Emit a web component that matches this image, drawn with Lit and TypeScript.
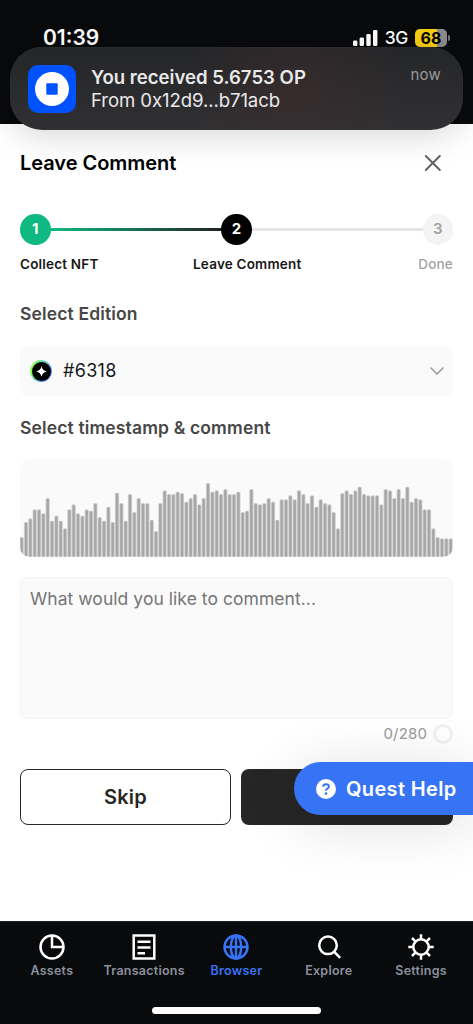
import { LitElement, html, css, svg } from "lit";
import { customElement } from "lit/decorators.js";

// Waveform amplitudes in thirds of a pixel.
const PEAKS = [
  60, 105, 116, 143, 143, 131, 177, 109, 124, 109, 86, 143, 158, 131, 124, 143, 139, 162, 120, 109,
  151, 105, 193, 162, 109, 189, 135, 177, 162, 162, 112, 78, 162, 200, 189, 189, 196, 192, 166, 177,
  189, 158, 177, 222, 196, 200, 189, 204, 189, 189, 196, 135, 139, 204, 162, 158, 162, 177, 166, 112,
  173, 173, 185, 173, 200, 189, 162, 185, 151, 173, 162, 158, 135, 86, 192, 200, 189, 200, 211, 189,
  185, 185, 185, 158, 204, 200, 177, 204, 177, 211, 166, 177, 173, 143, 143, 86, 60, 56, 56, 56,
];

const assetsIcon = svg`<circle cx="13" cy="13" r="11.5"/><path d="M13 1.5V13H24.5"/>`;
const transactionsIcon = svg`<path d="M2.7 1.5H23.3V24.5H2.7Z"/><path d="M6.5 7.7H19.5M6.5 13.6H19.5M6.5 19.3H14"/>`;
const browserIcon = svg`<circle cx="13" cy="13" r="11.5"/><ellipse cx="13" cy="13" rx="5.2" ry="11.5"/><path d="M1.5 13H24.5M13 1.5V24.5"/>`;
const exploreIcon = svg`<circle cx="12" cy="11.3" r="8.8"/><path d="M18 17.6L24.2 23.8"/>`;
const settingsIcon = svg`<circle cx="13" cy="13" r="7.7"/><path d="M13 .3V5.5M13 20.5V25.7M.3 13H5.5M20.5 13H25.7M4 4L7.6 7.6M18.4 18.4L22 22M4 22L7.6 18.4M18.4 7.6L22 4"/>`;

const TABS = [
  { label: "Assets", icon: assetsIcon, cls: "" },
  { label: "Transactions", icon: transactionsIcon, cls: "" },
  { label: "Browser", icon: browserIcon, cls: "active" },
  { label: "Explore", icon: exploreIcon, cls: "" },
  { label: "Settings", icon: settingsIcon, cls: "" },
];

@customElement("app-root")
export class AppRoot extends LitElement {
  static styles = css`
    :host {
      display: flex;
      flex-direction: column;
      position: relative;
      width: 473px;
      height: 1024px;
      overflow: hidden;
      background: #fff;
      font-family: Inter, "Liberation Sans", sans-serif;
      color: #000;
    }
    * { box-sizing: border-box; }
    svg { display: block; flex: none; }
    .top {
      flex: none;
      height: 124px;
      background: #090a0c;
      color: #fff;
      display: flex;
      justify-content: space-between;
      align-items: flex-start;
      padding: 26px 23px 0 43px;
    }
    .clock { font-size: 21px; line-height: 24px; font-weight: 600; letter-spacing: 0; }
    .status { display: flex; align-items: center; height: 24px; }
    .net { font-size: 17.5px; font-weight: 500; line-height: 24px; margin: 0 7px 0 7px; letter-spacing: -0.4px; }
    .battery {
      width: 32px; height: 18px; border-radius: 5px; color: #000;
      background: linear-gradient(90deg, #f7cf0e 68%, #8c8c8e 68%);
      font-size: 16px; font-weight: 700; line-height: 18px; text-align: center;
    }
    .nub { width: 2px; height: 6px; border-radius: 0 2px 2px 0; background: #77777a; margin-left: 1px; }
    .toast {
      position: absolute; left: 10px; top: 47px; width: 453px; height: 83px;
      border-radius: 32px;
      background: radial-gradient(ellipse 110px 100px at 63% 55%, rgba(65, 43, 44, 0.5), transparent),
        linear-gradient(#252628, #303032);
      box-shadow: 0 6px 34px rgba(0, 0, 0, 0.16), inset 0 0 1px #555;
      color: #e9e9ea;
      display: flex; padding: 18px 22px 0 18px; gap: 15px;
    }
    .toast-text { flex: 1; padding-top: 1px; font-size: 18.6px; line-height: 23px; }
    .toast-title { font-weight: 600; letter-spacing: 0; }
    .toast-from { letter-spacing: -0.1px; }
    .now { font-size: 15px; line-height: 20px; color: #9a999c; letter-spacing: 0.2px; }
    .sheet { flex: 1; padding: 0 20px; display: flex; flex-direction: column; }
    .title-row { display: flex; justify-content: space-between; align-items: center; height: 30px; margin-top: 24px; padding-right: 11px; }
    .title { margin: 0; font-size: 20px; font-weight: 600; line-height: 30px; letter-spacing: -0.04px; }
    .steps { display: flex; align-items: center; margin-top: 36px; height: 31px; }
    .dot {
      flex: none; width: 30.5px; height: 30.5px; border-radius: 50%; background: #000; color: #fff;
      font-size: 15px; font-weight: 700; line-height: 30px; text-align: center;
    }
    .dot.done { background: #10b981; }
    .dot.todo { background: #f4f4f5; color: #a1a1a1; font-weight: 600; }
    .line { flex: 1; height: 3px; background: #e6e6e9; }
    .line.filled { background: linear-gradient(90deg, #10b981, #222); }
    .labels { display: grid; grid-template-columns: 173px auto 1fr; margin-top: 9px; font-size: 13.5px; line-height: 20px; font-weight: 600; color: #171717; letter-spacing: 0.2px; }
    .last { text-align: right; color: #a3a3a3; font-weight: 500; }
    .section { margin: 0; font-size: 17.5px; font-weight: 600; line-height: 24px; color: #474747; letter-spacing: 0.14px; }
    .edition { margin-top: 28px; }
    .stamp { margin-top: 20px; }
    .select {
      margin-top: 20px; height: 50px; border-radius: 8px; background: #fafafa;
      display: flex; align-items: center; padding: 0 9px 0 10px;
    }
    .token {
      width: 22px; height: 22px; border-radius: 50%; padding: 1.5px;
      background: conic-gradient(#5fe0a0, #6fb8e8, #5b7ff0, #4a62e8, #5fc8c8, #7cff4e, #9df85a, #5fe0a0);
    }
    .select-value { flex: 1; margin-left: 11px; padding-bottom: 1px; font-size: 18px; color: #171717; letter-spacing: 0.3px; }
    .wave { margin-top: 19px; width: 433px; height: 98px; border-radius: 10px; overflow: hidden; background: #fafafa; }
    .comment {
      margin-top: 20px; height: 142px; border-radius: 8px; background: #fafafa; border: 1px solid #f4f4f4;
      padding: 9px 9px; font-size: 17.5px; line-height: 24px; color: #757575; letter-spacing: 0.05px;
    }
    .counter { display: flex; justify-content: flex-end; align-items: center; gap: 6px; height: 29px; font-size: 15px; color: #999; letter-spacing: 0.15px; }
    .ring { width: 20px; height: 20px; border-radius: 50%; border: 3px solid #f1f1f1; }
    .actions { display: grid; grid-template-columns: 211px 212px; gap: 10px; margin-top: 21px; }
    .skip {
      height: 56px; border: 1.5px solid #262626; border-radius: 8px; text-align: center;
      font-size: 20px; line-height: 54px; font-weight: 600; color: #262626; letter-spacing: 0.2px;
    }
    .submit { height: 56px; border-radius: 8px; background: #262626; }
    .help {
      position: absolute; left: 294px; top: 762px; width: 179px; height: 53px; border-radius: 27px 0 0 27px;
      background: #3773f5; color: #fff; display: flex; align-items: center; padding-left: 22px; gap: 10px;
      box-shadow: 0 8px 60px rgba(0, 0, 0, 0.14); font-size: 20px; letter-spacing: 0.35px; font-weight: 600; white-space: nowrap;
    }
    .tabs {
      flex: none; height: 103px; background: #090a0c; border-top: 1px solid #222426;
      display: grid; grid-template-columns: repeat(5, 92.3px); justify-content: center; padding-top: 12px; align-content: start;
    }
    .tab { display: flex; flex-direction: column; align-items: center; color: #8a919e; font-size: 12.5px; line-height: 18px; font-weight: 600; letter-spacing: 0.25px; gap: 2px; }
    .glyph { color: #fff; fill: none; stroke: currentColor; stroke-width: 2.5; }
    .active, .active .glyph { color: #3773f5; }
    .home { position: absolute; left: 152px; top: 1007px; width: 169px; height: 7px; border-radius: 4px; background: #fff; }
  `;

  render() {
    return html`
      <div class="top">
        <div class="clock">01:39</div>
        <div class="status">
          <svg width="26" height="18" viewBox="0 0 26 18" fill="#fff">
            <rect x="1" y="11.5" width="4.4" height="5.5" rx="1.2"/><rect x="7.6" y="8.5" width="4.4" height="8.5" rx="1.2"/>
            <rect x="14.3" y="5" width="4.4" height="12" rx="1.2"/><rect x="21" y="1" width="4.4" height="16" rx="1.2"/>
          </svg>
          <div class="net">3G</div>
          <div class="battery">68</div>
          <div class="nub"></div>
        </div>
      </div>

      <div class="sheet">
        <div class="title-row">
          <h1 class="title">Leave Comment</h1>
          <svg width="18" height="18" viewBox="0 0 18 18" stroke="#666" stroke-width="2" stroke-linecap="round"><path d="M1.8 2L15.8 16M15.8 2L1.8 16"/></svg>
        </div>
        <div class="steps">
          <div class="dot done">1</div><div class="line filled"></div>
          <div class="dot">2</div><div class="line"></div>
          <div class="dot todo">3</div>
        </div>
        <div class="labels"><span>Collect NFT</span><span>Leave Comment</span><span class="last">Done</span></div>

        <h2 class="section edition">Select Edition</h2>
        <div class="select">
          <div class="token">
            <svg width="19" height="19" viewBox="0 0 19 19"><circle cx="9.5" cy="9.5" r="9.5"/><path fill="#fff" d="M9.5 4.3Q10.5 8.5 14.7 9.5Q10.5 10.5 9.5 14.7Q8.5 10.5 4.3 9.5Q8.5 8.5 9.5 4.3Z"/></svg>
          </div>
          <span class="select-value">#6318</span>
          <svg width="14" height="8" viewBox="0 0 14 8" fill="none" stroke="#999" stroke-width="1.5" stroke-linecap="round"><path d="M1 1L7 7L13 1"/></svg>
        </div>

        <h2 class="section stamp">Select timestamp &amp; comment</h2>
        <div class="wave">
          <svg width="433" height="98" viewBox="0 0 433 98">
            ${PEAKS.map((p, i) => {
              const x = i * 4.333;
              const y = 98.4 - p / 3;
              return svg`<rect x=${x - 0.4} y=${y - 0.4} width="4.2" height=${p / 3} rx="1.5" fill="#cfcfcf"/>
                <rect x=${x + 0.5} y=${y + 0.3} width="2.4" height=${p / 3 - 1} rx="1.2" fill="#a6a6a6"/>`;
            })}
          </svg>
        </div>
        <div class="comment">What would you like to comment...</div>
        <div class="counter"><span>0/280</span><span class="ring"></span></div>
        <div class="actions"><div class="skip">Skip</div><div class="submit"></div></div>
      </div>

      <div class="tabs">
        ${TABS.map((t) => html`<div class="tab ${t.cls}">
          <svg class="glyph" width="26" height="26" viewBox="0 0 26 26">${t.icon}</svg><span>${t.label}</span>
        </div>`)}
      </div>

      <div class="toast">
        <svg width="48" height="48" viewBox="0 0 48 48"><rect width="48" height="48" rx="10" fill="#0052ff"/><circle cx="24" cy="24" r="17" fill="#fff"/><rect x="18.3" y="18.3" width="11.4" height="11.4" rx="1" fill="#0052ff"/></svg>
        <div class="toast-text">
          <div class="toast-title">You received 5.6753 OP</div>
          <div class="toast-from">From 0x12d9...b71acb</div>
        </div>
        <div class="now">now</div>
      </div>
      <div class="help">
        <svg width="20" height="20" viewBox="0 0 20 20"><circle cx="10" cy="10" r="10" fill="#fff"/><path d="M7.2 7.7Q7.2 5.2 10 5.2Q12.9 5.2 12.9 7.5Q12.9 8.9 11.3 9.7Q10 10.4 10 11.8" fill="none" stroke="#3773f5" stroke-width="2"/><circle cx="10" cy="14.6" r="1.3" fill="#3773f5"/></svg>
        <span>Quest Help</span>
      </div>
      <div class="home"></div>
    `;
  }
}
